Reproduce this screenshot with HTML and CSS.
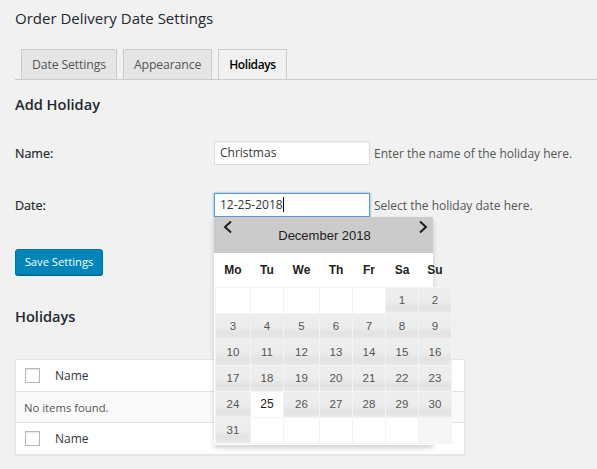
FILE: index.html
```html
<!DOCTYPE html>
<html>
<head>
<meta charset="utf-8">
<link rel="stylesheet" href="styles.css">
</head>
<body>
<div class="wrap">
  <h1 class="title">Order Delivery Date Settings</h1>
  <nav class="tabs">
    <a class="tab">Date Settings</a>
    <a class="tab">Appearance</a>
    <a class="tab active">Holidays</a>
  </nav>
  <h2 class="heading first">Add Holiday</h2>
  <div class="form">
    <div class="row">
      <label class="label">Name:</label>
      <div class="field-wrap">
        <div class="field">Christmas</div>
      </div>
      <span class="desc">Enter the name of the holiday here.</span>
    </div>
    <div class="row">
      <label class="label">Date:</label>
      <div class="field-wrap">
        <div class="field focus">12-25-2018<span class="caret"></span></div>
        <div class="datepicker">
          <div class="dp-head">
            <svg class="dp-prev" width="12" height="14" viewBox="0 0 12 14"><path d="M9 1.5 L3 7 L9 12.5" fill="none" stroke="#1e1e1e" stroke-width="2"/></svg>
            <span class="dp-title">December 2018</span>
            <svg class="dp-next" width="12" height="14" viewBox="0 0 12 14"><path d="M3 1.5 L9 7 L3 12.5" fill="none" stroke="#1e1e1e" stroke-width="2"/></svg>
          </div>
          <table class="dp-table">
            <colgroup><col class="c35"><col class="c33"><col class="c36"><col class="c33"><col class="c33"><col class="c33"><col class="c33"></colgroup>
            <thead>
              <tr><th>Mo</th><th>Tu</th><th>We</th><th>Th</th><th>Fr</th><th>Sa</th><th>Su</th></tr>
            </thead>
            <tbody>
              <tr><td class="e"></td><td class="e"></td><td class="e"></td><td class="e"></td><td class="e"></td><td class="d">1</td><td class="d">2</td></tr>
              <tr><td class="d">3</td><td class="d">4</td><td class="d">5</td><td class="d">6</td><td class="d">7</td><td class="d">8</td><td class="d">9</td></tr>
              <tr><td class="d">10</td><td class="d">11</td><td class="d">12</td><td class="d">13</td><td class="d">14</td><td class="d">15</td><td class="d">16</td></tr>
              <tr><td class="d">17</td><td class="d">18</td><td class="d">19</td><td class="d">20</td><td class="d">21</td><td class="d">22</td><td class="d">23</td></tr>
              <tr><td class="d">24</td><td class="d today">25</td><td class="d">26</td><td class="d">27</td><td class="d">28</td><td class="d">29</td><td class="d">30</td></tr>
              <tr><td class="d">31</td><td class="e"></td><td class="e"></td><td class="e"></td><td class="e"></td><td class="e"></td><td class="e out"></td></tr>
            </tbody>
          </table>
        </div>
      </div>
      <span class="desc">Select the holiday date here.</span>
    </div>
  </div>
  <button class="btn">Save Settings</button>
  <h2 class="heading second">Holidays</h2>
  <div class="list">
    <div class="lrow head"><span class="cb"></span><span class="col">Name</span></div>
    <div class="lrow empty">No items found.</div>
    <div class="lrow foot"><span class="cb"></span><span class="col">Name</span></div>
  </div>
</div>
</body>
</html>
```
FILE: styles.css
```css
* { box-sizing: border-box; }
html, body { margin: 0; padding: 0; }
body {
  background: #f1f1f1;
  font-family: "Open Sans", "Noto Sans", sans-serif;
  font-size: 12px;
  color: #444;
  width: 597px;
  height: 469px;
  overflow: hidden;
}
.wrap { padding: 8px 0 0 15px; }
.title {
  margin: 0;
  font-size: 15px;
  line-height: 20px;
  font-weight: 400;
  color: #23282d;
}
.tabs {
  display: flex;
  margin-top: 21px;
  border-bottom: 1px solid #ccc;
  height: 31px;
  align-items: flex-end;
}
.tab {
  display: block;
  margin-left: 6px;
  height: 30px;
  padding: 0 10px;
  border: 1px solid #ccc;
  border-bottom: none;
  background: #e5e5e5;
  color: #555;
  font-size: 12.3px;
  font-weight: 400;
  line-height: 29px;
  letter-spacing: -0.15px;
}
.tab.active { background: #f1f1f1; color: #000; font-weight: 600; letter-spacing: -0.4px; font-size: 12px; }
.heading {
  margin: 0;
  font-size: 14.6px;
  line-height: 20px;
  font-weight: 600;
  color: #23282d;
}
.heading.first { margin-top: 14px; }
.form {
  margin-top: 27px;
  margin-bottom: 32px;
  display: flex;
  flex-direction: column;
  gap: 28px;
}
.row {
  display: flex;
  align-items: center;
  height: 24px;
}
.label {
  width: 199px;
  font-size: 12.5px;
  font-weight: 400;
  color: #23282d;
  -webkit-text-stroke: 0.2px #23282d;
}
.field-wrap { position: relative; }
.field {
  width: 156px;
  height: 24px;
  border: 1px solid #ddd;
  background: #fff;
  box-shadow: inset 0 1px 2px rgba(0,0,0,.07);
  padding: 0 5px;
  font-size: 12px;
  line-height: 22px;
  color: #32373c;
}
.field.focus {
  border-color: #5b9dd9;
  box-shadow: 0 0 2px rgba(30,140,190,.8);
}
.caret {
  display: inline-block;
  width: 1px;
  height: 15px;
  background: #000;
  vertical-align: -3px;
}
.desc { margin-left: 4px; color: #555; font-size: 12px; }
.btn {
  display: block;
  width: 88px;
  height: 26px;
  margin: 0;
  padding: 0;
  background: #0085ba;
  border: 1px solid #0073aa;
  border-radius: 3px;
  box-shadow: 0 1px 0 #006799;
  color: #fff;
  font-family: inherit;
  font-size: 11.2px;
  line-height: 22px;
}
.heading.second { margin-top: 31px; }
.list {
  margin-top: 33px;
  width: 450px;
  background: #fff;
  border: 1px solid #e5e5e5;
  box-shadow: 0 1px 1px rgba(0,0,0,.04);
}
.lrow {
  display: flex;
  align-items: center;
  height: 31px;
  padding-left: 9px;
  font-size: 12px;
  color: #32373c;
}
.lrow.empty {
  height: 32px;
  background: #f9f9f9;
  border-top: 1px solid #e1e1e1;
  border-bottom: 1px solid #e1e1e1;
  font-size: 11.3px;
  color: #555;
  padding-left: 8px;
}
.cb {
  width: 15px;
  height: 15px;
  border: 1px solid #b4b9be;
  background: #fff;
  box-shadow: inset 0 1px 2px rgba(0,0,0,.1);
}
.col { margin-left: 15px; }

/* datepicker */
.datepicker {
  position: absolute;
  left: 0;
  top: 24px;
  width: 219px;
  background: #fff;
  box-shadow: 0 3px 5px rgba(0,0,0,.18);
  font-family: "Liberation Sans", Arial, sans-serif;
  z-index: 5;
  padding-bottom: 1px;
}
.dp-head {
  position: relative;
  height: 36px;
  background: #cbcbcb;
  display: flex;
  align-items: center;
  justify-content: center;
}
.dp-title { font-size: 13px; color: #222; padding-top: 0; padding-left: 2px; }
.dp-prev { position: absolute; left: 8px; top: 3px; }
.dp-next { position: absolute; left: 203px; top: 3px; }
.dp-table {
  border-collapse: collapse;
  table-layout: fixed;
  width: 236px;
  margin-left: 1px;
}
.c35 { width: 35px; }
.c33 { width: 33px; }
.c36 { width: 36px; }
.dp-table th {
  height: 34px;
  font-size: 12px;
  font-weight: bold;
  color: #222;
  text-align: center;
  padding: 0;
}
.dp-table td {
  height: 26px;
  padding: 0;
  text-align: center;
  font-size: 11.5px;
  color: #555;
  border: 1px solid #f3f3f3;
}
.dp-table td.d {
  background: linear-gradient(#eeeeee 0%, #ececec 55%, #e2e2e2 80%, #e8e8e8 100%);
}
.dp-table td.today { background: #fff; color: #212121; font-size: 12px; }
.dp-table td.out { background: #f6f6f6; }
```
